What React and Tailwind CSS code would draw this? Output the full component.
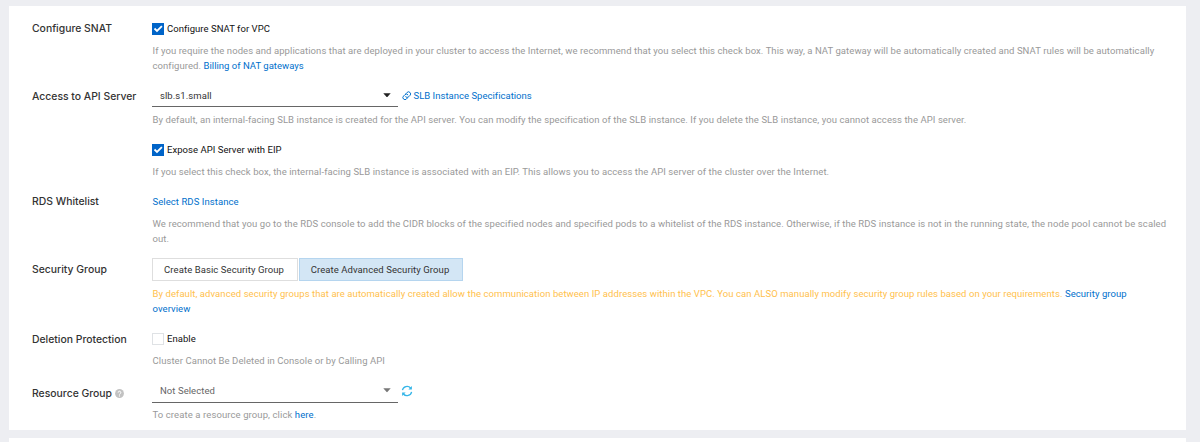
import React from "react";

function Row({ label, labelTop = "mt-0", className = "", children }) {
  return (
    <section className={`flex ${className}`}>
      <div
        className={`flex h-[15px] w-[120px] shrink-0 items-center gap-[3px] font-['Inter','Liberation_Sans',sans-serif] text-[10.4px] font-medium tracking-normal text-[#333] ${labelTop}`}
      >
        {label}
      </div>
      <div className="flex flex-col items-start">{children}</div>
    </section>
  );
}

function Link({ children, className = "" }) {
  return (
    <a href="#" className={`text-[#0070cc] ${className}`}>
      {children}
    </a>
  );
}

function Hint({ className = "", children }) {
  return <p className={`pl-[0.5px] text-[#999] ${className}`}>{children}</p>;
}

function Checkbox({ checked, children }) {
  return (
    <label className="flex h-[15px] items-center gap-[3px] tracking-[0.04px] text-[#111]">
      <span
        className={`flex size-3 items-center justify-center ${
          checked ? "bg-[#0064c8]" : "border border-[#dfe2e5] bg-white"
        }`}
      >
        {checked && (
          <svg viewBox="0 0 12 12" className="size-3" fill="none" stroke="#fff" strokeWidth="1.8">
            <path d="M2.5 5.5 5 7.9 9.900 3.2" />
          </svg>
        )}
      </span>
      {children}
    </label>
  );
}

function Select({ value, muted }) {
  return (
    <div
      className={`flex w-[246px] items-center justify-between border-b border-[#666] pr-[7px] pl-2 ${
        muted ? "h-6 text-[#666]" : "h-[23px] text-[#333]"
      }`}
    >
      <span>{value}</span>
      <svg viewBox="0 0 8 4" className={`h-[4.5px] w-2 ${muted ? "fill-[#777]" : "fill-[#222]"}`}>
        <path d="M0.3 0h7.4L4.6 3.6q-.6.6-1.2 0z" />
      </svg>
    </div>
  );
}

function LinkIcon() {
  return (
    <svg
      viewBox="0 0 24 24"
      className="size-[9.5px]"
      fill="none"
      stroke="#0070cc"
      strokeWidth="2.5"
      strokeLinecap="round"
    >
      <path d="M10 6.500 12.800 3.700a5.200 5.200 0 0 1 7.400 7.400l-3.600 3.600a5.200 5.200 0 0 1-7.400 0" />
      <path d="M14 17.500 11.200 20.300a5.200 5.200 0 0 1-7.400-7.400l3.600-3.600a5.200 5.200 0 0 1 7.400 0" />
    </svg>
  );
}

function RefreshIcon() {
  return (
    <svg viewBox="0 0 12 12" className="size-3" fill="none" stroke="#35b5e8" strokeWidth="1.3">
      <path d="M1.4 5.2A4.7 4.7 0 0 1 9.6 3" />
      <path d="M10.6 6.8A4.7 4.7 0 0 1 2.4 9" />
      <path d="M10.9 .9v3.5H7.4z" fill="#35b5e8" stroke="none" />
      <path d="M1.1 11.1V7.6h3.5z" fill="#35b5e8" stroke="none" />
    </svg>
  );
}

function HelpIcon() {
  return (
    <svg viewBox="0 0 12 12" className="size-[9px]" fill="none">
      <circle cx="6" cy="6" r="5.9" fill="#c2c2c2" />
      <path d="M4.2 4.8a1.8 1.8 0 1 1 2.7 1.5q-.9.5-.9 1.2" stroke="#fff" strokeWidth="1.3" />
      <circle cx="6" cy="9.2" r=".8" fill="#fff" />
    </svg>
  );
}

export default function App() {
  return (
    <div className="h-[442px] overflow-hidden bg-[#edeef2] pt-1.5 pr-3.5 pl-[9px] font-['Roboto','Liberation_Sans',sans-serif] text-[9.5px] leading-[15px] tracking-[0.068px] whitespace-nowrap">
      <main className="h-[424px] bg-white pt-[15px] pl-[23px]">
        <Row label="Configure SNAT">
          <Checkbox checked>Configure SNAT for VPC</Checkbox>
          <Hint className="mt-[7px]">
            If you require the nodes and applications that are deployed in your cluster to access
            the Internet, we recommend that you select this check box. This way, a NAT gateway will
            be automatically created and SNAT rules will be automatically
            <br />
            configured. <Link className="tracking-[0.02px]">Billing of NAT gateways</Link>
          </Hint>
        </Row>

        <Row label="Access to API Server" className="mt-[11px]" labelTop="mt-[5px]">
          <div className="flex items-center">
            <Select value="slb.s1.small" />
            <Link className="ml-[4px] flex items-center gap-[2px] tracking-[0.02px]">
              <LinkIcon />
              SLB Instance Specifications
            </Link>
          </div>
          <Hint className="mt-[5px] tracking-[0.078px]">
            By default, an internal-facing SLB instance is created for the API server. You can
            modify the specification of the SLB instance. If you delete the SLB instance, you cannot
            access the API server.
          </Hint>
          <div className="mt-[15px]">
            <Checkbox checked>Expose API Server with EIP</Checkbox>
          </div>
          <Hint className="mt-[7px] tracking-[0.078px]">
            If you select this check box, the internal-facing SLB instance is associated with an
            EIP. This allows you to access the API server of the cluster over the Internet.
          </Hint>
        </Row>

        <Row label="RDS Whitelist" className="mt-[15px]">
          <Link className="pl-[0.5px]">Select RDS Instance</Link>
          <Hint className="mt-[7px] tracking-[0.087px]">
            We recommend that you go to the RDS console to add the CIDR blocks of the specified
            nodes and specified pods to a whitelist of the RDS instance. Otherwise, if the RDS
            instance is not in the running state, the node pool cannot be scaled
            <br />
            out.
          </Hint>
        </Row>

        <Row label="Security Group" className="mt-3" labelTop="mt-1">
          <div className="flex gap-px tracking-[0.08px] text-[#333]">
            <button className="h-[23px] w-[146px] border border-[#dedede] bg-white pr-[2px]">
              Create Basic Security Group
            </button>
            <button className="h-[23px] w-[164px] border border-[#b5d5ef] bg-[#d3e6f5] pr-[2px]">
              Create Advanced Security Group
            </button>
          </div>
          <p className="mt-[5px] pl-[0.5px] text-[#ffc14d]">
            By default, advanced security groups that are automatically created allow the
            communication between IP addresses within the VPC. You can ALSO manually modify security
            group rules based on your requirements. <Link>Security group</Link>
            <br />
            <Link>overview</Link>
          </p>
        </Row>

        <Row label="Deletion Protection" className="mt-[15px]" labelTop="mt-px">
          <Checkbox>Enable</Checkbox>
          <Hint className="mt-[7px]">Cluster Cannot Be Deleted in Console or by Calling API</Hint>
        </Row>

        <Row
          label={
            <>
              Resource Group <HelpIcon />
            </>
          }
          className="mt-[11px]"
          labelTop="mt-[7px]"
        >
          <div className="flex items-center gap-[3px]">
            <Select value="Not Selected" muted />
            <RefreshIcon />
          </div>
          <Hint className="mt-1 tracking-[0.1px]">
            To create a resource group, click <Link>here</Link>.
          </Hint>
        </Row>
      </main>
      <div className="mt-2 h-1 bg-white" />
    </div>
  );
}
